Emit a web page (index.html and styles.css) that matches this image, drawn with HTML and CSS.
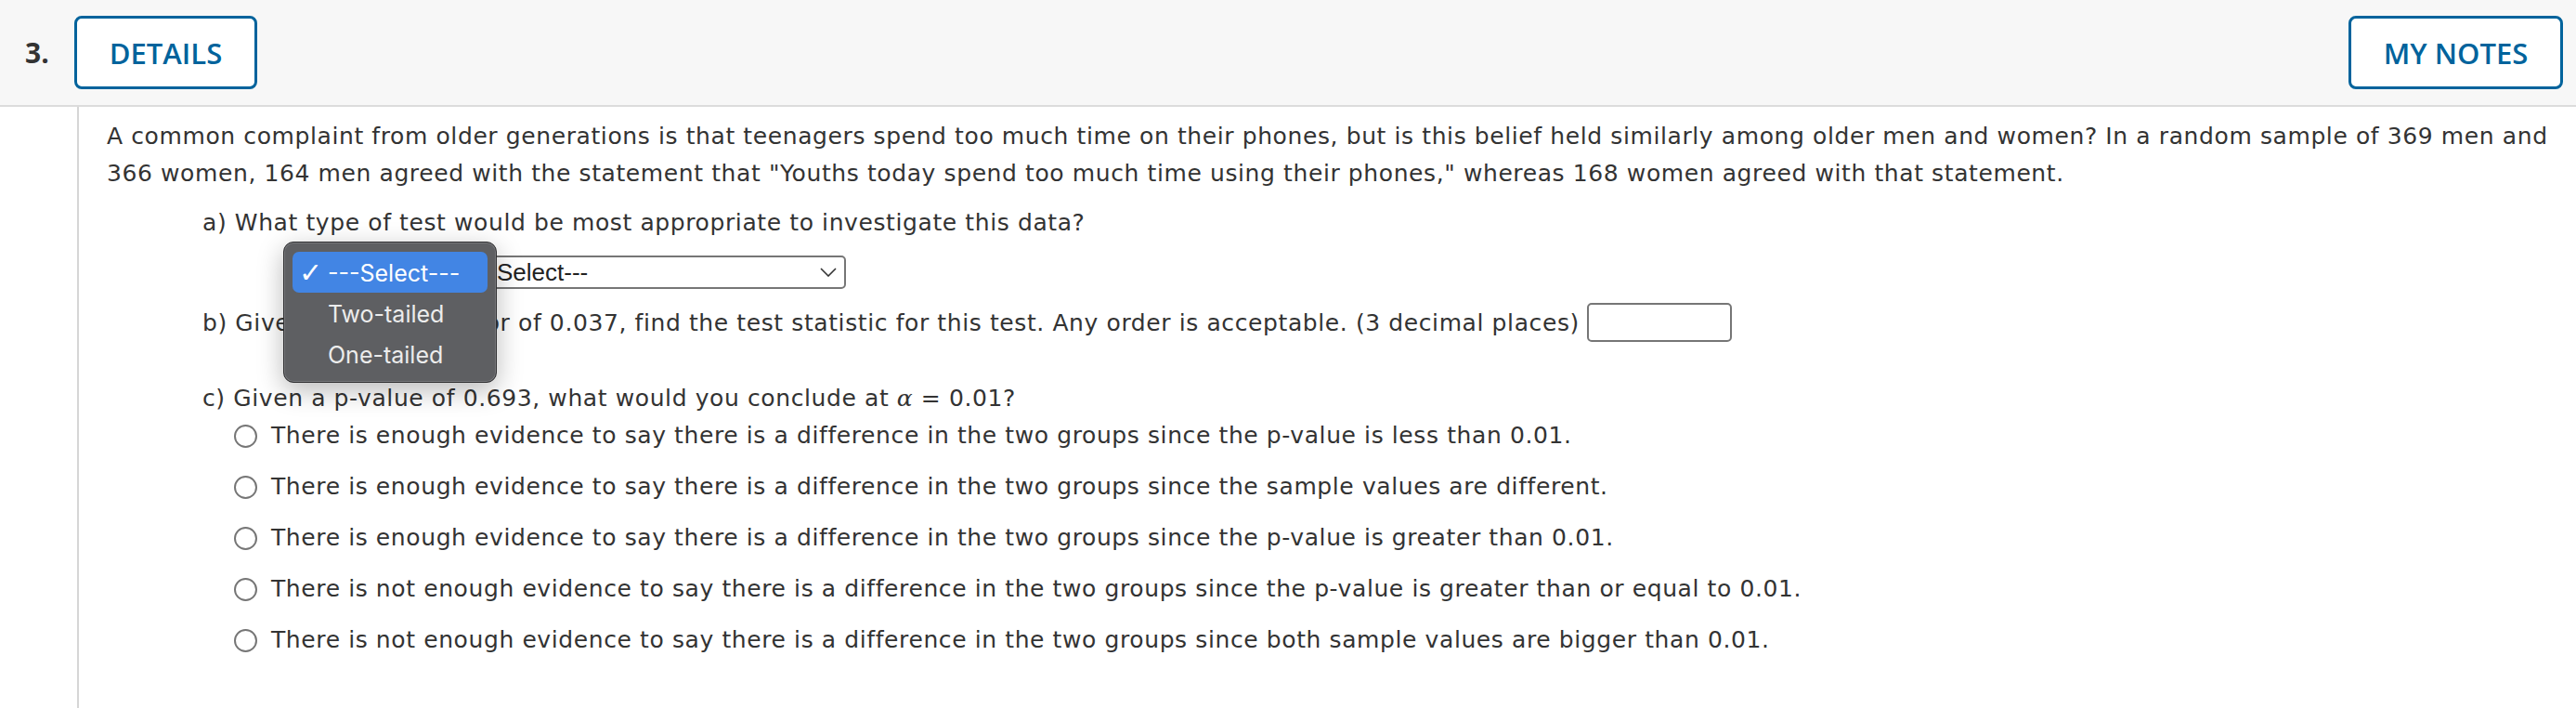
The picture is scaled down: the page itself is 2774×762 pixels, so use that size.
FILE: index.html
```html
<!DOCTYPE html>
<html>
<head>
<meta charset="utf-8">
<link rel="stylesheet" href="styles.css">
</head>
<body>
<div class="header">
  <span class="qnum">3.</span>
  <button class="btn details">DETAILS</button>
  <span class="spacer"></span>
  <button class="btn notes">MY NOTES</button>
</div>
<div class="main">
  <div class="gutter"></div>
  <div class="content">
    <p class="intro">A common complaint from older generations is that teenagers spend too much time on their phones, but is this belief held similarly among older men and women? In a random sample of 369 men and 366 women, 164 men agreed with the statement that "Youths today spend too much time using their phones," whereas 168 women agreed with that statement.</p>
    <div class="part">a) What type of test would be most appropriate to investigate this data?</div>
    <div class="select-row">
      <div class="select"><span class="select-text">---Select---</span><svg class="chev" width="18" height="10" viewBox="0 0 18 10"><path d="M1 1 L9 9 L17 1" fill="none" stroke="#333" stroke-width="1.6"/></svg></div>
    </div>
    <div class="part part-b"><span class="b-text">b) Given a standard error of 0.037, find the test statistic for this test. Any order is acceptable. (3 decimal places)</span><span class="input"></span></div>
    <div class="part part-c">c) Given a p-value of 0.693, what would you conclude at <i class="math">α</i> = 0.01?</div>
    <ul class="options">
      <li><span class="radio"></span>There is enough evidence to say there is a difference in the two groups since the p-value is less than 0.01.</li>
      <li><span class="radio"></span>There is enough evidence to say there is a difference in the two groups since the sample values are different.</li>
      <li><span class="radio"></span>There is enough evidence to say there is a difference in the two groups since the p-value is greater than 0.01.</li>
      <li><span class="radio"></span>There is not enough evidence to say there is a difference in the two groups since the p-value is greater than or equal to 0.01.</li>
      <li><span class="radio"></span>There is not enough evidence to say there is a difference in the two groups since both sample values are bigger than 0.01.</li>
    </ul>
  </div>
</div>
<div class="popup">
  <div class="opt sel"><span class="check">✓</span>---Select---</div>
  <div class="opt">Two-tailed</div>
  <div class="opt">One-tailed</div>
</div>
</body>
</html>
```
FILE: styles.css
```css
html, body {
  margin: 0;
  padding: 0;
  background: #fff;
}
body {
  position: relative;
  width: 2774px;
  height: 762px;
  overflow: hidden;
  font-family: "DejaVu Sans", Verdana, sans-serif;
  color: #333;
}
.header {
  height: 113px;
  background: #f7f7f7;
  border-bottom: 2px solid #dcdcdc;
  display: flex;
  align-items: center;
  padding: 0 14px 0 27px;
}
.qnum {
  font-family: "Open Sans", sans-serif;
  font-weight: 700;
  font-size: 30px;
  color: #333;
  width: 53px;
}
.btn {
  height: 79px;
  box-sizing: border-box;
  border: 3px solid #00639c;
  border-radius: 8px;
  background: #fff;
  color: #00639c;
  font-family: "Open Sans", sans-serif;
  font-weight: 600;
  font-size: 31px;
  padding: 0;
  margin: 0;
}
.details { width: 197px; }
.notes { width: 231px; }
.spacer { flex: 1; }
.main {
  display: flex;
  height: 647px;
}
.gutter {
  width: 83px;
  border-right: 2px solid #d6d6d6;
  flex: none;
}
.content {
  padding-left: 30px;
  flex: 1;
  font-size: 25px;
  letter-spacing: 0.6px;
  line-height: 40px;
}
.intro {
  margin: 12px 20px 0 0;
}
.part {
  margin: 13px 0 0 103px;
}
.select-row {
  margin: 15px 0 0 392px;
  display: flex;
}
.select {
  width: 404px;
  height: 36px;
  box-sizing: border-box;
  border: 2px solid #767676;
  border-radius: 5px;
  display: flex;
  align-items: center;
  justify-content: space-between;
  padding: 0 8px 0 0;
  font-family: "Liberation Sans", Arial, sans-serif;
  font-size: 26px;
  letter-spacing: 0;
  color: #222;
}
.chev { flex: none; }
.part-b {
  margin-top: 14px;
  display: flex;
  align-items: center;
  gap: 8px;
}
.b-text {
  padding-top: 3px;
}
.input {
  width: 156px;
  height: 42px;
  box-sizing: border-box;
  border: 2px solid #767676;
  border-radius: 5px;
  display: inline-block;
}
.part-c {
  margin-top: 41px;
}
.math {
  font-family: "DejaVu Serif", serif;
}
.options {
  list-style: none;
  margin: 0 0 0 137px;
  padding: 0;
  display: flex;
  flex-direction: column;
  gap: 15px;
}
.options li {
  display: flex;
  align-items: center;
}
.radio {
  width: 25px;
  height: 25px;
  box-sizing: border-box;
  border: 2px solid #767676;
  border-radius: 50%;
  margin-right: 15px;
  flex: none;
}
.popup {
  position: absolute;
  left: 305px;
  top: 260px;
  width: 230px;
  height: 152px;
  box-sizing: border-box;
  background: #5e5f62;
  border: 1px solid #2f2f31;
  border-radius: 11px;
  box-shadow: 0 8px 28px rgba(0, 0, 0, 0.28), inset 0 0 0 1px #77787b;
  padding: 10px 9px;
  font-family: Inter, "Liberation Sans", sans-serif;
  font-size: 25px;
  color: #ececec;
}
.opt {
  height: 44px;
  line-height: 46px;
  padding-left: 38px;
  position: relative;
  border-radius: 7px;
}
.opt.sel {
  background: #4285e4;
  color: #fff;
}
.check {
  position: absolute;
  left: 7px;
  top: 0;
  font-family: "DejaVu Sans", sans-serif;
  font-size: 30px;
  font-weight: 700;
}
```
